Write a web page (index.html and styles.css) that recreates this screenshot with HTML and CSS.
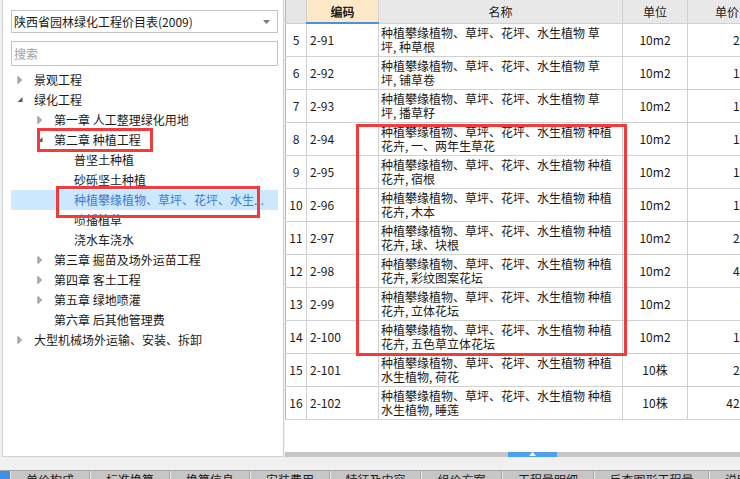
FILE: index.html
```html
<!DOCTYPE html>
<html lang="zh-CN">
<head>
<meta charset="utf-8">
<title>园林绿化工程价目表</title>
<link rel="stylesheet" href="styles.css">
</head>
<body>
<div class="app">
  <div class="main">
    <aside class="side">
      <div class="select">
        <span class="select-text">陕西省园林绿化工程价目表(2009)</span>
        <svg class="select-arrow" width="7" height="4" viewBox="0 0 7 4"><polygon points="0,0 7,0 3.5,4" fill="#7a7a7a"/></svg>
      </div>
      <div class="search">搜索</div>
      <ul class="tree">
        <li class="node l0"><span class="tg"><svg width="18" height="20" viewBox="0 0 18 20"><polygon points="2,6.5 5.5,10 2,13.5" class="col"/></svg></span><span class="lbl">景观工程</span></li>
        <li class="node l0"><span class="tg"><svg width="18" height="20" viewBox="0 0 18 20"><polygon points="6.5,7 6.5,12 1.5,12" class="exp"/></svg></span><span class="lbl">绿化工程</span></li>
        <li class="node l1"><span class="tg"><svg width="18" height="20" viewBox="0 0 18 20"><polygon points="2,6.5 5.5,10 2,13.5" class="col"/></svg></span><span class="lbl">第一章 人工整理绿化用地</span></li>
        <li class="node l1"><span class="tg"><svg width="18" height="20" viewBox="0 0 18 20"><polygon points="6.5,7 6.5,12 1.5,12" class="exp"/></svg></span><span class="lbl">第二章 种植工程</span></li>
        <li class="node l2"><span class="tg"></span><span class="lbl">普坚土种植</span></li>
        <li class="node l2"><span class="tg"></span><span class="lbl">砂砾坚土种植</span></li>
        <li class="node l2 sel"><span class="tg"></span><span class="lbl">种植攀缘植物、草坪、花坪、水生...</span></li>
        <li class="node l2"><span class="tg"></span><span class="lbl">喷播植草</span></li>
        <li class="node l2"><span class="tg"></span><span class="lbl">浇水车浇水</span></li>
        <li class="node l1"><span class="tg"><svg width="18" height="20" viewBox="0 0 18 20"><polygon points="2,6.5 5.5,10 2,13.5" class="col"/></svg></span><span class="lbl">第三章 掘苗及场外运苗工程</span></li>
        <li class="node l1"><span class="tg"><svg width="18" height="20" viewBox="0 0 18 20"><polygon points="2,6.5 5.5,10 2,13.5" class="col"/></svg></span><span class="lbl">第四章 客土工程</span></li>
        <li class="node l1"><span class="tg"><svg width="18" height="20" viewBox="0 0 18 20"><polygon points="2,6.5 5.5,10 2,13.5" class="col"/></svg></span><span class="lbl">第五章 绿地喷灌</span></li>
        <li class="node l1"><span class="tg"></span><span class="lbl">第六章 后其他管理费</span></li>
        <li class="node l0"><span class="tg"><svg width="18" height="20" viewBox="0 0 18 20"><polygon points="2,6.5 5.5,10 2,13.5" class="col"/></svg></span><span class="lbl">大型机械场外运输、安装、拆卸</span></li>
      </ul>
    </aside>
    <section class="grid">
      <div class="grid-body">
        <table class="tbl">
          <colgroup><col class="c-no"><col class="c-code"><col class="c-name"><col class="c-unit"><col class="c-price"></colgroup>
          <thead>
            <tr><th class="h-no"></th><th class="h-code">编码</th><th>名称</th><th>单位</th><th>单价</th></tr>
          </thead>
          <tbody>
            <tr><td class="no">5</td><td class="code">2-91</td><td class="name">种植攀缘植物、草坪、花坪、水生植物 草<br>坪, 种草根</td><td class="unit">10m2</td><td class="price">25.38</td></tr>
            <tr><td class="no">6</td><td class="code">2-92</td><td class="name">种植攀缘植物、草坪、花坪、水生植物 草<br>坪, 铺草卷</td><td class="unit">10m2</td><td class="price">15.16</td></tr>
            <tr><td class="no">7</td><td class="code">2-93</td><td class="name">种植攀缘植物、草坪、花坪、水生植物 草<br>坪, 播草籽</td><td class="unit">10m2</td><td class="price">14.82</td></tr>
            <tr><td class="no">8</td><td class="code">2-94</td><td class="name">种植攀缘植物、草坪、花坪、水生植物 种植<br>花卉, 一、两年生草花</td><td class="unit">10m2</td><td class="price">12.36</td></tr>
            <tr><td class="no">9</td><td class="code">2-95</td><td class="name">种植攀缘植物、草坪、花坪、水生植物 种植<br>花卉, 宿根</td><td class="unit">10m2</td><td class="price">14.73</td></tr>
            <tr><td class="no">10</td><td class="code">2-96</td><td class="name">种植攀缘植物、草坪、花坪、水生植物 种植<br>花卉, 木本</td><td class="unit">10m2</td><td class="price">13.80</td></tr>
            <tr><td class="no">11</td><td class="code">2-97</td><td class="name">种植攀缘植物、草坪、花坪、水生植物 种植<br>花卉, 球、块根</td><td class="unit">10m2</td><td class="price">27.41</td></tr>
            <tr><td class="no">12</td><td class="code">2-98</td><td class="name">种植攀缘植物、草坪、花坪、水生植物 种植<br>花卉, 彩纹图案花坛</td><td class="unit">10m2</td><td class="price">45.27</td></tr>
            <tr><td class="no">13</td><td class="code">2-99</td><td class="name">种植攀缘植物、草坪、花坪、水生植物 种植<br>花卉, 立体花坛</td><td class="unit">10m2</td><td class="price">9.58</td></tr>
            <tr><td class="no">14</td><td class="code">2-100</td><td class="name">种植攀缘植物、草坪、花坪、水生植物 种植<br>花卉, 五色草立体花坛</td><td class="unit">10m2</td><td class="price">15.72</td></tr>
            <tr><td class="no">15</td><td class="code">2-101</td><td class="name">种植攀缘植物、草坪、花坪、水生植物 种植<br>水生植物, 荷花</td><td class="unit">10株</td><td class="price">22.48</td></tr>
            <tr><td class="no">16</td><td class="code">2-102</td><td class="name">种植攀缘植物、草坪、花坪、水生植物 种植<br>水生植物, 睡莲</td><td class="unit">10株</td><td class="price">426.90</td></tr>
          </tbody>
        </table>
      </div>
      <div class="hscroll">
        <div class="thumb"><svg width="7" height="4" viewBox="0 0 7 4"><polygon points="0,4 3.5,0 7,4" fill="#fff"/></svg></div>
      </div>
    </section>
  </div>
  <nav class="tabs">
    <span class="tab-mark"></span>
    <span class="tab w80">单价构成</span>
    <span class="tab w80">标准换算</span>
    <span class="tab w80">换算信息</span>
    <span class="tab w80">安装费用</span>
    <span class="tab w91">特征及内容</span>
    <span class="tab w81">组价方案</span>
    <span class="tab w92">工程量明细</span>
    <span class="tab w115">反查图形工程量</span>
    <span class="tab w80">说明信息</span>
  </nav>

  <div class="mark mark-1"></div>
  <div class="mark mark-2"></div>
  <div class="mark mark-3"></div>
</div>
</body>
</html>
```

FILE: styles.css
```css
* { box-sizing: border-box; }
html, body { margin: 0; padding: 0; }
body {
  width: 740px;
  height: 479px;
  overflow: hidden;
  background: #f0f0f0;
  font-family: "Noto Sans CJK SC", "Noto Sans", sans-serif;
  font-size: 12px;
  color: #1a1a1a;
}
.app { position: relative; width: 740px; height: 479px; }

.main {
  display: flex;
  height: 457px;
  padding-left: 2px;
}

/* ---------- left panel ---------- */
.side {
  width: 282px;
  flex: none;
  background: #fff;
  border: 1px solid #d2d2d2;
  border-top: none;
  padding: 10px 5px 0 8px;
}
.select {
  display: flex;
  align-items: center;
  justify-content: space-between;
  height: 23px;
  border: 1px solid #c4c4c4;
  padding: 0 7px 0 2px;
  line-height: 21px;
}
.select-text { color: #1a1a1a; }
.select-arrow { display: block; }
.search {
  margin-top: 8px;
  height: 25px;
  border: 1px solid #c4c4c4;
  padding-left: 2px;
  line-height: 23px;
  color: #a0a0a0;
}
.tree {
  list-style: none;
  margin: 4px 0 0;
  padding: 0;
}
.node {
  display: flex;
  align-items: center;
  height: 20px;
  white-space: nowrap;
  color: #1a1a1a;
}
.node.l0 { padding-left: 5px; }
.node.l1 { padding-left: 25px; }
.node.l2 { padding-left: 45px; }
.tg { width: 18px; height: 20px; flex: none; }
.tg svg { display: block; }
.col { fill: #b8b8b8; stroke: #8a8a8a; stroke-width: 1; }
.exp { fill: #5c5c5c; }
.lbl { line-height: 20px; }
.node.sel { background: #cce8ff; }
.node.sel .lbl { color: #3e7bd0; }

/* ---------- right grid ---------- */
.grid {
  flex: 1;
  margin-left: 1px;
  display: flex;
  flex-direction: column;
  min-width: 0;
}
.grid-body {
  flex: 1;
  background: #fff;
  overflow: hidden;
}
.tbl {
  border-collapse: collapse;
  table-layout: fixed;
  width: 482px;
}
.c-no { width: 21px; }
.c-code { width: 72px; }
.c-name { width: 244px; }
.c-unit { width: 65px; }
.c-price { width: 80px; }
.tbl th, .tbl td {
  border: 1px solid #d0d0d0;
  padding: 0;
  font-weight: normal;
  vertical-align: middle;
  overflow: hidden;
  white-space: nowrap;
}
.tbl th {
  height: 23px;
  background: #e8e8e8;
  text-align: center;
  font-size: 12px;
  color: #1a1a1a;
  border-top: none;
}
.tbl th.h-no { background: #e6e6e6; border-left-color: #b8b8b8; }
.tbl th.h-code {
  background: #fde8c8;
  font-weight: bold;
  border-bottom: 2px solid #4a90e2;
}
.tbl th:last-child { text-align: right; padding-right: 28px; }
.tbl td { height: 33px; line-height: 14px; }
.tbl td.no { text-align: center; border-left-color: #b8b8b8; }
.tbl td.code { padding-left: 3px; }
.tbl td.name { padding-left: 2px; }
.tbl td.unit { text-align: center; }
.tbl td.price { text-align: right; padding-right: 4px; }

.hscroll {
  height: 5px;
  background: #c6c6c6;
  display: flex;
  padding-left: 223px;
}
.thumb {
  width: 49px;
  height: 5px;
  background: #4d9ff0;
  display: flex;
  align-items: flex-start;
  justify-content: center;
}
.thumb svg { display: block; margin-top: 0; }

/* ---------- bottom tabs ---------- */
.tabs {
  display: flex;
  margin-top: 13px;
  height: 9px;
  border-top: 1px solid #a4a4a4;
  background: #c6c6c6;
  overflow: hidden;
}
.tab-mark { width: 10px; flex: none; background: #3f8fe8; }
.tab {
  flex: none;
  text-align: center;
  color: #1a1a1a;
  font-size: 12px;
  line-height: 16px;
  padding-top: 1px;
  border-left: 1px solid #e4e4e4;
  border-right: 1px solid #a8a8a8;
  white-space: nowrap;
}
.w80 { width: 80px; }
.w81 { width: 81px; }
.w91 { width: 91px; }
.w92 { width: 92px; }
.w115 { width: 115px; }

/* ---------- annotation boxes ---------- */
.mark {
  position: absolute;
  border: 3px solid #f23b3b;
  pointer-events: none;
}
.mark-1 { left: 37px; top: 128px; width: 116px; height: 24px; }
.mark-2 { left: 56px; top: 186px; width: 204px; height: 32px; }
.mark-3 { left: 356px; top: 124px; width: 271px; height: 232px; }
```
